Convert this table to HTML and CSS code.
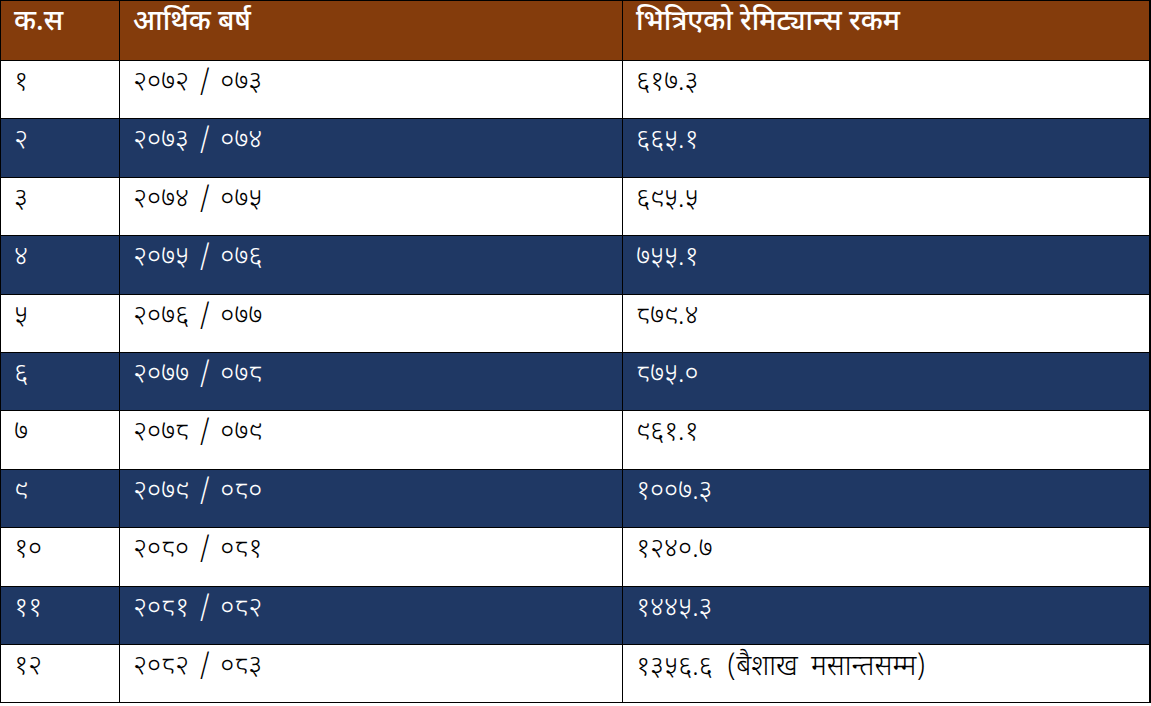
FILE: index.html
```html
<!DOCTYPE html>
<html lang="ne">
<head>
<meta charset="utf-8">
<title>रेमिट्यान्स</title>
<link rel="stylesheet" href="styles.css">
</head>
<body>
<table class="remit">
  <colgroup>
    <col class="c1"><col class="c2"><col class="c3">
  </colgroup>
  <thead>
    <tr class="head"><th>क.स</th><th>आर्थिक बर्ष</th><th>भित्रिएको रेमिट्यान्स रकम</th></tr>
  </thead>
  <tbody>
    <tr class="light"><td>१</td><td>२०७२ / ०७३</td><td>६१७.३</td></tr>
    <tr class="dark"><td>२</td><td>२०७३ / ०७४</td><td>६६५.१</td></tr>
    <tr class="light"><td>३</td><td>२०७४ / ०७५</td><td>६९५.५</td></tr>
    <tr class="dark"><td>४</td><td>२०७५ / ०७६</td><td>७५५.१</td></tr>
    <tr class="light"><td>५</td><td>२०७६ / ०७७</td><td>८७९.४</td></tr>
    <tr class="dark"><td>६</td><td>२०७७ / ०७८</td><td>८७५.०</td></tr>
    <tr class="light"><td>७</td><td>२०७८ / ०७९</td><td>९६१.१</td></tr>
    <tr class="dark"><td>९</td><td>२०७९ / ०८०</td><td>१००७.३</td></tr>
    <tr class="light"><td>१०</td><td>२०८० / ०८१</td><td>१२४०.७</td></tr>
    <tr class="dark"><td>११</td><td>२०८१ / ०८२</td><td>१४४५.३</td></tr>
    <tr class="light"><td>१२</td><td>२०८२ / ०८३</td><td>१३५६.६ <span class="note">(बैशाख मसान्तसम्म)</span></td></tr>
  </tbody>
</table>
</body>
</html>
```

FILE: styles.css
```css
html, body {
  margin: 0;
  padding: 0;
  background: #ffffff;
}

.remit {
  border-collapse: collapse;
  width: 1149px;
  table-layout: fixed;
  font-family: "Noto Sans Devanagari", "Noto Sans", sans-serif;
}

.c1 { width: 119px; }
.c2 { width: 503px; }
.c3 { width: 527px; }

.remit th,
.remit td {
  border: 1px solid #000000;
  text-align: left;
  vertical-align: top;
  padding: 4px 12px 0 13px;
  height: 53.4px;
  box-sizing: content-box;
}

.remit th:last-child,
.remit td:last-child {
  border-right: 2px solid #000000;
}

.head th {
  background: #843c0c;
  color: #ffffff;
  font-size: 28px;
  font-weight: 500;
  line-height: 38px;
  height: 56px;
  padding-top: 3px;
}

.remit td {
  font-size: 27px;
  font-weight: 300;
  line-height: 38px;
  word-spacing: 3px;
}

.note {
  font-size: 28px;
  word-spacing: 6px;
  margin-left: 4px;
}

.light td {
  background: #ffffff;
  color: #000000;
}

.dark td {
  background: #1f3864;
  color: #ffffff;
}
```
